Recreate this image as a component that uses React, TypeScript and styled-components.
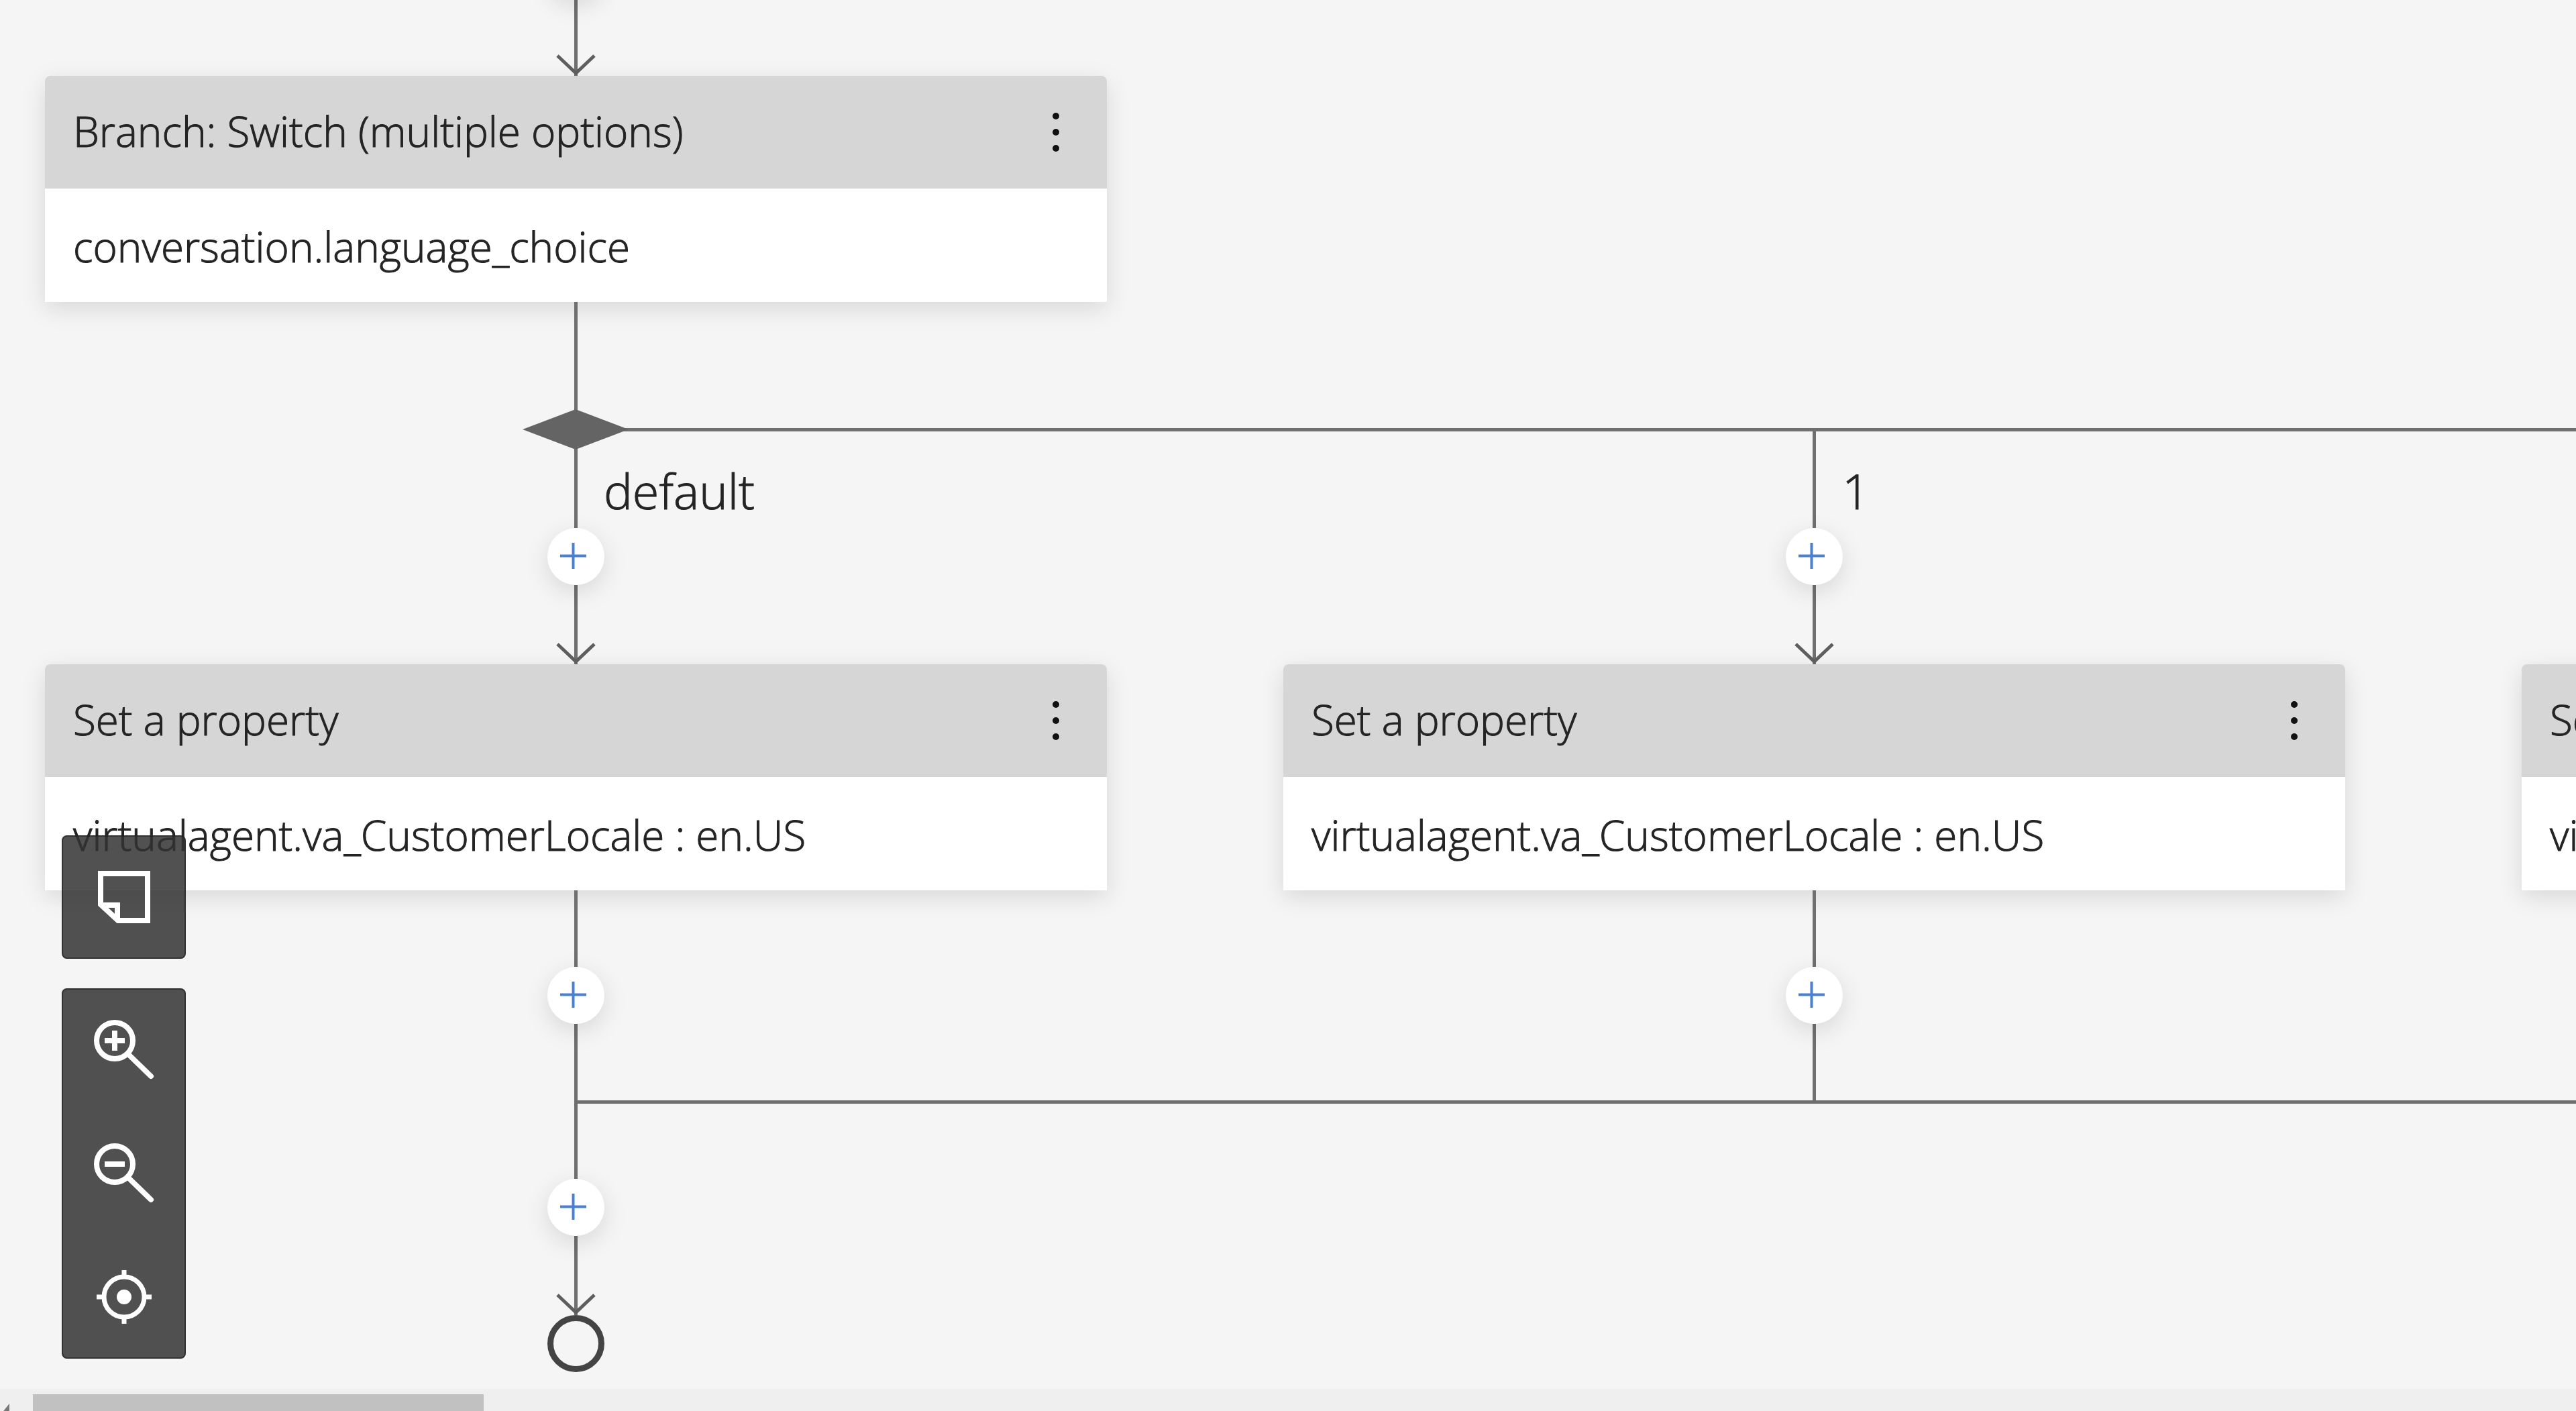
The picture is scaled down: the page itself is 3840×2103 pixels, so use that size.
import React from "react";
import styled, { createGlobalStyle } from "styled-components";

const line = "#6f6f6f";

const GlobalStyle = createGlobalStyle`
  *, *::before, *::after { box-sizing: border-box; }
  body {
    margin: 0;
    background: #f5f5f5;
    color: #242424;
    font-family: "Open Sans", "Noto Sans", sans-serif;
    font-weight: 300;
    -webkit-text-stroke: 1px currentColor;
    overflow: hidden;
  }
  button {
    font: inherit;
    color: inherit;
    padding: 0;
    border: 0;
    background: none;
    cursor: pointer;
  }
  svg { display: block; }
`;

const Page = styled.div`
  display: flex;
  flex-direction: column;
  height: 100vh;
`;

const Canvas = styled.main`
  position: relative;
  flex: 1;
  min-height: 0;
  overflow: hidden;
  padding-left: 67px;
`;

const Flow = styled.div`
  display: flex;
  flex-direction: column;
  margin-top: -86px;
`;

const Column = styled.div`
  display: flex;
  flex-direction: column;
  align-items: center;
  flex: none;
  width: 1583px;
`;

const Branches = styled.div`
  display: flex;
  gap: 263px;
`;

const Rail = styled.div`
  position: relative;
  height: 5px;
  margin-left: 789px;
  background: ${line};
`;

const DiamondMark = styled.svg`
  position: absolute;
  z-index: 1;
  left: -77px;
  top: -28px;
  width: 158px;
  height: 60px;
`;

const Wire = styled.div<{ $length: number }>`
  position: relative;
  width: 5px;
  height: ${(p) => p.$length}px;
  background: ${line};
`;

const ArrowHead = styled.svg`
  position: absolute;
  left: -30px;
  bottom: 0;
  width: 65px;
  height: 36px;
`;

const BranchLabel = styled.span`
  position: absolute;
  left: 44px;
  bottom: 8px;
  font-size: 72px;
  line-height: 96px;
  white-space: nowrap;
`;

const AddButton = styled.button`
  position: relative;
  z-index: 1;
  display: grid;
  place-items: center;
  width: 85px;
  height: 85px;
  padding: 0 8px 2px 0;
  border-radius: 50%;
  background: #fff;
  box-shadow: 0 10px 36px rgba(0, 0, 0, 0.12);
`;

const NodeCard = styled.article`
  width: 100%;
  border-radius: 8px 8px 0 0;
  background: #fff;
  box-shadow: 0 10px 36px rgba(0, 0, 0, 0.12);
`;

const NodeHeader = styled.header`
  display: flex;
  align-items: center;
  justify-content: space-between;
  height: 168px;
  padding: 0 44px 0 42px;
  border-radius: 8px 8px 0 0;
  background: #d6d6d6;
`;

const NodeTitle = styled.h2`
  margin: 0;
  padding-bottom: 4px;
  font-size: 62px;
  font-weight: inherit;
  line-height: 84px;
  white-space: nowrap;
`;

const NodeBody = styled.p`
  margin: 0;
  padding: 44px 42px 41px;
  font-size: 62px;
  line-height: 84px;
  white-space: nowrap;
`;

const MenuButton = styled.button`
  display: grid;
  place-items: center;
  width: 64px;
  height: 84px;
`;

const EndMark = styled.div`
  width: 85px;
  height: 85px;
  border: 9px solid #444;
  border-radius: 50%;
`;

const Tools = styled.nav`
  position: absolute;
  left: 92px;
  bottom: 45px;
  z-index: 2;
  display: flex;
  flex-direction: column;
  gap: 44px;
`;

const ToolGroup = styled.div`
  display: flex;
  flex-direction: column;
  width: 185px;
  border-radius: 8px;
  background: rgba(51, 51, 51, 0.85);
  box-shadow: inset 0 0 0 2px rgba(20, 20, 20, 0.5);
`;

const ToolButton = styled.button`
  display: grid;
  place-items: center;
  height: 184px;
`;

const ScrollTrack = styled.div`
  display: flex;
  flex: none;
  height: 33px;
  padding-top: 8px;
  background: #efefef;
  overflow: hidden;
`;

const ScrollArrow = styled.div`
  width: 49px;
  padding: 14px 0 0 2px;
`;

const ScrollThumb = styled.div`
  width: 17.5%;
  background: #c1c1c1;
`;

function Add() {
  return (
    <AddButton aria-label="Add step">
      <svg width="41" height="41" viewBox="0 0 41 41" fill="none" stroke="#4a80d2" strokeWidth="4">
        <path d="M20.5 1V40M1 20.5H40" />
      </svg>
    </AddButton>
  );
}

function Arrow({ length }: { length: number }) {
  return (
    <Wire $length={length}>
      <ArrowHead viewBox="0 0 65 36" fill="none" stroke="#5e5e5e" strokeWidth="5">
        <path d="M5 6L32.5 32L60 6" />
      </ArrowHead>
    </Wire>
  );
}

function Node({ title, detail }: { title: string; detail: string }) {
  return (
    <NodeCard>
      <NodeHeader>
        <NodeTitle>{title}</NodeTitle>
        <MenuButton aria-label="More actions">
          <svg width="12" height="60" viewBox="0 0 12 60" fill="#111">
            <circle cx="6" cy="6" r="5" />
            <circle cx="6" cy="30" r="5" />
            <circle cx="6" cy="54" r="5" />
          </svg>
        </MenuButton>
      </NodeHeader>
      <NodeBody>{detail}</NodeBody>
    </NodeCard>
  );
}

function Branch({ label }: { label?: string }) {
  return (
    <Column>
      <Wire $length={144}>{label && <BranchLabel>{label}</BranchLabel>}</Wire>
      <Add />
      <Arrow length={118} />
      <Node title="Set a property" detail="virtualagent.va_CustomerLocale : en.US" />
      <Wire $length={114} />
      <Add />
      <Wire $length={114} />
    </Column>
  );
}

function ToolIcon({ children }: { children: React.ReactNode }) {
  return (
    <svg width="96" height="96" viewBox="0 0 96 96" fill="none" stroke="#fff" strokeWidth="8">
      {children}
    </svg>
  );
}

export default function App() {
  return (
    <Page>
      <GlobalStyle />
      <Canvas>
        <Flow>
          <Column>
            <Add />
            <Arrow length={114} />
            <Node title="Branch: Switch (multiple options)" detail="conversation.language_choice" />
            <Wire $length={188} />
          </Column>
          <Rail>
            <DiamondMark viewBox="0 0 158 60" fill="#646464">
              <path d="M0 30L79 0L158 30L79 60Z" />
            </DiamondMark>
          </Rail>
          <Branches>
            <Branch label="default" />
            <Branch label="1" />
            <Branch />
          </Branches>
          <Rail />
          <Column>
            <Wire $length={112} />
            <Add />
            <Arrow length={118} />
            <EndMark />
          </Column>
        </Flow>
        <Tools aria-label="Canvas tools">
          <ToolGroup>
            <ToolButton aria-label="Notes">
              <ToolIcon>
                <path d="M13 13H83V83H39L13 59Z" />
                <path d="M14 60H38V82" />
              </ToolIcon>
            </ToolButton>
          </ToolGroup>
          <ToolGroup>
            <ToolButton aria-label="Zoom in">
              <ToolIcon>
                <circle cx="34" cy="34" r="27" />
                <path d="M34 19V49M19 34H49" />
                <path d="M54 54L88 87" strokeLinecap="round" />
              </ToolIcon>
            </ToolButton>
            <ToolButton aria-label="Zoom out">
              <ToolIcon>
                <circle cx="34" cy="34" r="27" />
                <path d="M19 34H49" />
                <path d="M54 54L88 87" strokeLinecap="round" />
              </ToolIcon>
            </ToolButton>
            <ToolButton aria-label="Center flow">
              <ToolIcon>
                <circle cx="48" cy="48" r="30" strokeWidth="7" />
                <circle cx="48" cy="48" r="11" fill="#fff" stroke="none" />
                <path d="M48 8V18M48 78V88M7 48H18M78 48H89" strokeWidth="7" />
              </ToolIcon>
            </ToolButton>
          </ToolGroup>
        </Tools>
      </Canvas>
      <ScrollTrack>
        <ScrollArrow>
          <svg width="14" height="30" viewBox="0 0 14 30" fill="#777">
            <path d="M12 0V30L0 15Z" />
          </svg>
        </ScrollArrow>
        <ScrollThumb />
      </ScrollTrack>
    </Page>
  );
}
